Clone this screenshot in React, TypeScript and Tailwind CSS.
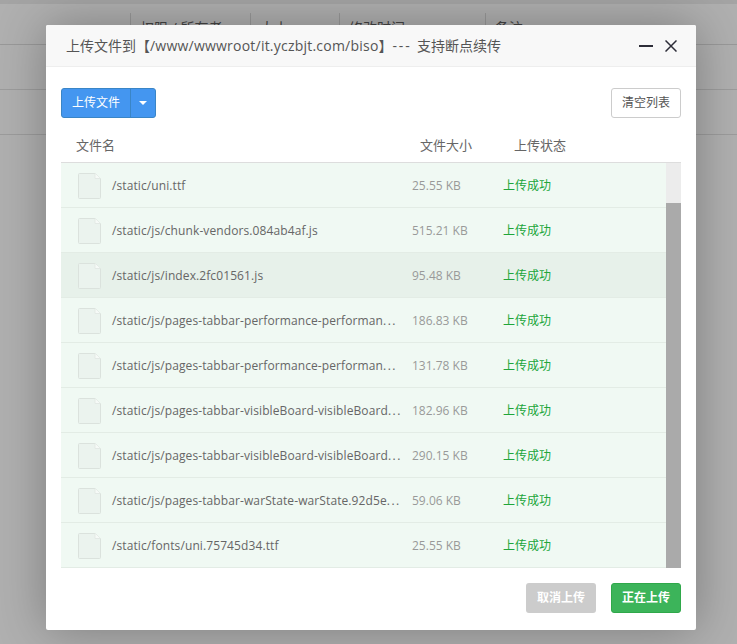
const files = [
  { name: '/static/uni.ttf', size: '25.55 KB' },
  { name: '/static/js/chunk-vendors.084ab4af.js', size: '515.21 KB' },
  { name: '/static/js/index.2fc01561.js', size: '95.48 KB', hover: true },
  { name: '/static/js/pages-tabbar-performance-performan', cut: true, size: '186.83 KB' },
  { name: '/static/js/pages-tabbar-performance-performan', cut: true, size: '131.78 KB' },
  { name: '/static/js/pages-tabbar-visibleBoard-visibleBoard', cut: true, size: '182.96 KB' },
  { name: '/static/js/pages-tabbar-visibleBoard-visibleBoard', cut: true, size: '290.15 KB' },
  { name: '/static/js/pages-tabbar-warState-warState.92d5e', cut: true, size: '59.06 KB' },
  { name: '/static/fonts/uni.75745d34.ttf', size: '25.55 KB' },
];

const FileIcon = () => (
  <svg width="23" height="26" viewBox="0 0 23 26" className="mt-[1px] shrink-0">
    <path d="M.5 1.5a1 1 0 0 1 1-1H17L22.5 5.5v19a1 1 0 0 1-1 1H1.5a1 1 0 0 1-1-1z" fill="#ebf3ee" stroke="#dbe2dd" />
    <path d="M17 .5V5.5H22.5" fill="#f6faf7" stroke="#e3e9e5" />
  </svg>
);

export default function App() {
  return (
    <div className="relative h-[644px] w-[737px] overflow-hidden bg-[#b0b0b0] font-['Open_Sans','Noto_Sans_CJK_SC',sans-serif] text-[12px]">
      {/* page behind the dialog */}
      <div className="h-[13px] border-t-[4px] border-[#a4a4a4]" />
      <div className="flex h-[32px] border-b border-[#999999] pl-[130px] text-[14px] text-[#444444]">
        <div className="w-[120px] border-l border-[#999999] pl-[9px] pt-[4px]">权限 / 所有者</div>
        <div className="w-[89px] border-l border-[#999999] pl-[9px] pt-[4px]">大小</div>
        <div className="w-[146px] border-l border-[#999999] pl-[9px] pt-[4px]">修改时间</div>
        <div className="border-l border-[#999999] pl-[9px] pt-[4px]">备注</div>
      </div>
      <div className="h-[45px] border-b border-[#9c9c9c]" />
      <div className="h-[45px] border-b border-[#9c9c9c]" />

      {/* dialog */}
      <div className="absolute left-[46px] top-[25px] flex h-[605px] w-[650px] flex-col rounded-[2px] bg-white shadow-[0_0_50px_rgba(0,0,0,0.3)]">
        <div className="flex h-[42px] shrink-0 items-center justify-between rounded-t-[2px] border-b border-[#eeeeee] bg-[#f8f8f8] pl-[21px] pr-[19px] text-[14px] text-[#555555]">
          <span className="-ml-[1px]">
            上传文件到【<span className="tracking-[0.22px]">/www/wwwroot/it.yczbjt.com/biso</span>】<span className="tracking-[1.8px]">--- </span>支持断点续传
          </span>
          <div className="flex items-center gap-[12px]">
            <div className="h-[2px] w-[14px] bg-[#2d2d38]" />
            <svg width="12" height="12" viewBox="0 0 12 12">
              <path d="M.5.5l11 11M11.5.5l-11 11" stroke="#2d2d38" strokeWidth="1.5" fill="none" />
            </svg>
          </div>
        </div>

        <div className="flex min-h-0 flex-1 flex-col px-[15px] pt-[21px]">
          <div className="flex items-start justify-between">
            <div className="flex h-[30px] overflow-hidden rounded-[3px] border border-[#3a85c6] bg-[#4496f0] text-white">
              <div className="flex w-[69px] items-center justify-center border-r border-[#3a85c6]">上传文件</div>
              <div className="flex w-[24px] items-center justify-center">
                <div className="h-0 w-0 border-x-[4px] border-t-[4px] border-x-transparent border-t-white" />
              </div>
            </div>
            <div className="flex h-[30px] w-[70px] items-center justify-center rounded-[3px] border border-[#cccccc] text-[#555555]">清空列表</div>
          </div>

          <div className="mt-[12px] flex h-[33px] shrink-0 items-center border-b border-[#dddddd] text-[13px] text-[#666666]">
            <div className="w-[359px] pl-[15px]">文件名</div>
            <div className="w-[94px]">文件大小</div>
            <div>上传状态</div>
          </div>

          <div className="flex min-h-0 flex-1">
            <div className="min-w-0 flex-1">
              {files.map((file) => (
                <div
                  key={file.name + file.size}
                  className={`flex h-[45px] items-center border-b border-[#e3ece5] pl-[17px] ${file.hover ? 'bg-[#e7f1ea]' : 'bg-[#f0f9f3]'}`}
                >
                  <FileIcon />
                  <div className="ml-[11px] w-[291px] whitespace-nowrap pt-[2px] tracking-[0.1px] text-[#666666]">
                    {file.name}
                    {file.cut && <span className="tracking-[1.5px]">...</span>}
                  </div>
                  <div className="ml-[9px] w-[92px] pt-[2px] text-[#999999]">{file.size}</div>
                  <div className="-ml-[1px] pt-[2px] text-[#20a53a]">上传成功</div>
                </div>
              ))}
            </div>
            <div className="flex w-[15px] shrink-0 flex-col bg-[#ececec] pt-[40px]">
              <div className="flex-1 bg-[#aaaaaa]" />
            </div>
          </div>

          <div className="flex h-[62px] shrink-0 items-start justify-end gap-[15px] pt-[15px] font-bold text-white">
            <div className="flex h-[30px] w-[70px] items-center justify-center rounded-[3px] bg-[#cccccc]">取消上传</div>
            <div className="flex h-[30px] w-[70px] items-center justify-center rounded-[3px] border border-[#2fa84a] bg-[#3cb45a]">正在上传</div>
          </div>
        </div>
      </div>
    </div>
  );
}
